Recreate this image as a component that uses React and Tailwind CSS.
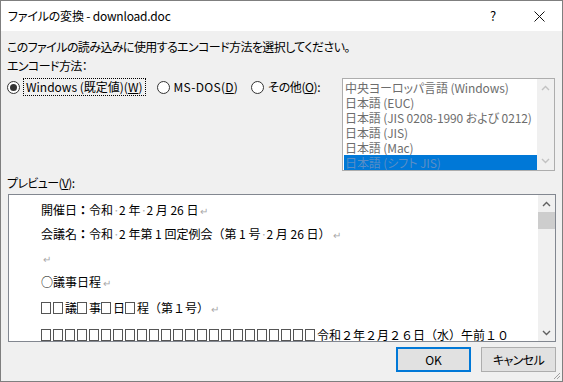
import React from 'react';

const ui = "font-['Noto_Sans_CJK_JP','Noto_Sans',sans-serif] [font-feature-settings:'palt']";

const encodings = [
  '中央ヨーロッパ言語 (Windows)',
  '日本語 (EUC)',
  '日本語 (JIS 0208-1990 および 0212)',
  '日本語 (JIS)',
  '日本語 (Mac)',
  '日本語 (シフト JIS)'
];

const Radio = ({ checked }) => (
  <span className="inline-flex w-[13px] h-[13px] rounded-full border border-[#333] bg-white items-center justify-center shrink-0">
    {checked && <span className="w-[7px] h-[7px] rounded-full bg-[#333]" />}
  </span>
);

const Sp = () => <span className="inline-block w-[6px] text-center text-[#b0b0b0]">·</span>;
const Ret = () => <span className="text-[#a8a8a8] ml-[2px] text-[10px]">↵</span>;
const Box = () => <span className="inline-block w-[10px] h-[12px] border border-[#555] mr-[2px] align-[-1px]" />;

const Chevron = ({ up, color = '#606060' }) => (
  <svg width="9" height="6" viewBox="0 0 9 6">
    <path d={up ? 'M1 5 L4.5 1.5 L8 5' : 'M1 1 L4.5 4.5 L8 1'} fill="none" stroke={color} strokeWidth="1.4" />
  </svg>
);

export default function App() {
  return (
    <div className={`${ui} relative w-[563px] h-[382px] bg-[#f0f0f0] border border-[#7f7f7f] text-[12px] text-black flex flex-col overflow-hidden`}>
      {/* title bar */}
      <div className="h-[30px] bg-white flex items-center shrink-0">
        <span className="pl-[7px] text-[12px] tracking-[-0.2px]">ファイルの変換 - download.doc</span>
        <span className="ml-auto w-[46px] text-center text-[13px]">?</span>
        <span className="w-[46px] flex justify-center">
          <svg width="11" height="11" viewBox="0 0 11 11">
            <path d="M0.5 0.5 L10.5 10.5 M10.5 0.5 L0.5 10.5" stroke="#111" strokeWidth="1" />
          </svg>
        </span>
      </div>

      <div className="flex-1 flex flex-col pl-[6px] pr-[6px]">
        <div className="mt-[8px] leading-[15px] tracking-[-0.6px]">このファイルの読み込みに使用するエンコード方法を選択してください。</div>
        <div className="mt-[4px] leading-[15px] tracking-[-0.6px]">エンコード方法：</div>

        <div className="mt-[5px] flex">
          <div className="flex items-start h-[18px]">
            <div className="flex items-center h-[18px]">
              <Radio checked />
              <span className="ml-[3px] px-[2px] h-[18px] leading-[16px] border border-dotted border-black">
                Windows (既定値)(<u>W</u>)
              </span>
            </div>
            <div className="flex items-center h-[18px] ml-[11px]">
              <Radio />
              <span className="ml-[4px] leading-[16px] tracking-[0.3px]">MS-DOS(<u>D</u>)</span>
            </div>
            <div className="flex items-center h-[18px] ml-[13px]">
              <Radio />
              <span className="ml-[4px] leading-[16px] tracking-[-0.4px]">その他(<u>O</u>):</span>
            </div>
          </div>

          <div className="ml-auto mr-[1px] w-[213px] h-[93px] border border-[#adadad] bg-white flex">
            <div className="flex-1 pt-[1px] pl-[1px] overflow-hidden">
              {encodings.map((e, i) => (
                <div
                  key={e}
                  className={`h-[15px] leading-[15px] pl-[1px] whitespace-nowrap overflow-hidden tracking-[-0.1px] ${
                    i === 5 ? 'bg-[#0078d7] text-[#5a8ec6]' : 'text-[#6d6d6d]'
                  }`}
                >
                  {e}
                </div>
              ))}
            </div>
            <div className="w-[17px] bg-[#f0f0f0] flex flex-col items-center justify-between py-[6px]">
              <Chevron up color="#c2c2c2" />
              <Chevron color="#c2c2c2" />
            </div>
          </div>
        </div>

        <div className="mt-[4px] leading-[15px] tracking-[-0.6px]">プレビュー(<u>V</u>):</div>

        <div className="mt-[4px] h-[148px] border border-[#828790] bg-white flex ml-[1px]">
          <div className="flex-1 pl-[32px] pt-[3px] text-[12px] leading-[23px] whitespace-nowrap overflow-hidden [font-feature-settings:normal]">
            <div>開催日<b className="font-bold">：</b>令和<Sp />2 年<Sp />2 月 26 日<Ret /></div>
            <div>会議名<b className="font-bold">：</b>令和<Sp />2 年第 1 回定例会（第 1 号<Sp />2 月 26 日）<Ret /></div>
            <div><Ret /></div>
            <div>○議事日程<Ret /></div>
            <div className="mt-[2px]">
              <Box /><Box />議<Box />事<Box />日<Box />程（第１号）<Ret />
            </div>
            <div className="mt-[3px]">
              {Array.from({ length: 23 }).map((_, i) => (
                <Box key={i} />
              ))}
              令和２年２月２６日（水）午前１０
            </div>
          </div>
          <div className="w-[17px] bg-[#f0f0f0] flex flex-col items-center">
            <div className="h-[17px] flex items-center justify-center">
              <Chevron up />
            </div>
            <div className="w-[17px] h-[17px] bg-[#cdcdcd]" />
            <div className="flex-1" />
            <div className="h-[17px] flex items-center justify-center">
              <Chevron />
            </div>
          </div>
        </div>

        <div className="mt-[5px] flex justify-end gap-[10px]">
          <button className="w-[75px] h-[25px] bg-[#e1e1e1] border-2 border-[#0078d7] leading-[20px]">OK</button>
          <button className="w-[75px] h-[25px] bg-[#e1e1e1] border border-[#adadad] leading-[22px] tracking-[-0.6px]">キャンセル</button>
        </div>
      </div>

      <svg className="absolute right-[1px] bottom-[1px]" width="10" height="10" viewBox="0 0 10 10">
        <path d="M9 3 L3 9 M9 6 L6 9" stroke="#a0a0a0" strokeWidth="1" />
      </svg>
    </div>
  );
}
